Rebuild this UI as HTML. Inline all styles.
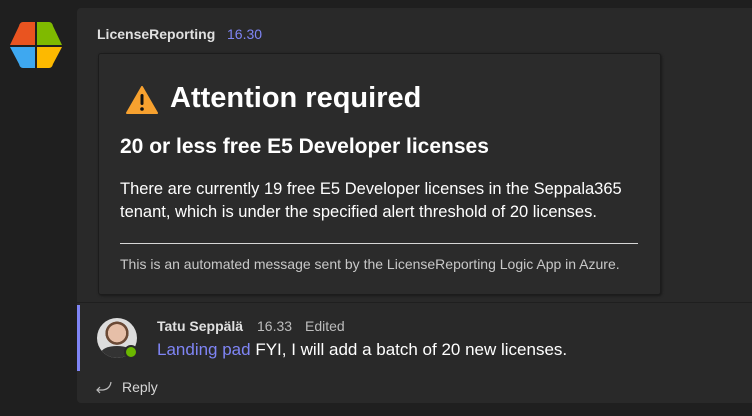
<!DOCTYPE html>
<html><head><meta charset="utf-8"><style>
*{margin:0;padding:0;box-sizing:border-box}
body{width:752px;height:416px;background:#1f1f1f;font-family:"Liberation Sans",sans-serif;position:relative;overflow:hidden;color:#fff}
.card{position:absolute;left:77px;top:8px;width:690px;height:395px;background:#292929;border-radius:4px}
.sep{position:absolute;left:77px;top:302px;width:690px;height:1px;background:#1f1f1f}
.inner{position:absolute;left:98px;top:53px;width:563px;height:242px;background:#2b2b2b;border:1px solid #1c1c1c;border-radius:3px;box-shadow:1px 1px 2px #1a1a1a}
.t{position:absolute;white-space:nowrap}
</style></head><body>
<div class="card"></div>
<div class="sep"></div>
<svg class="t" style="left:9px;top:21px" width="54" height="48" viewBox="0 0 54 48">
<path d="M14 1H26V24H1L10 5Q11 1 14 1Z" fill="#e95420"/>
<path d="M28 1H40Q43 1 44 5L53 24H28Z" fill="#7fba00"/>
<path d="M1 26H26V47H14Q11 47 10 43Z" fill="#3ea8f0"/>
<path d="M28 26H53L44 43Q43 47 40 47H28Z" fill="#fdb900"/>
</svg>
<div class="t" style="left:97px;top:26px;font-size:14px;font-weight:bold;color:#e0e0e0">LicenseReporting</div>
<div class="t" style="left:227px;top:26px;font-size:14px;color:#7f85f5">16.30</div>
<div class="inner"></div>
<svg class="t" style="left:126px;top:86px" width="32" height="28" viewBox="0 0 32 28"><path d="M16 1L31 27H1Z" fill="#f7a12f" stroke="#f7a12f" stroke-linejoin="round" stroke-width="2"/><rect x="14.5" y="8" width="3" height="11" rx="1.5" fill="#111"/><circle cx="16" cy="23" r="1.8" fill="#111"/></svg>
<div class="t" style="left:170px;top:82px;font-size:29px;font-weight:bold;color:#fff">Attention required</div>
<div class="t" style="left:120px;top:135px;font-size:21px;font-weight:bold;color:#fff">20 or less free E5 Developer licenses</div>
<div class="t" style="left:120px;top:178px;font-size:16.5px;line-height:23px;color:#fff">There are currently 19 free E5 Developer licenses in the Seppala365<br>tenant, which is under the specified alert threshold of 20 licenses.</div>
<div class="t" style="left:120px;top:243px;width:518px;height:1px;background:#d6d6d6"></div>
<div class="t" style="left:120px;top:256px;font-size:14px;color:#c8c8c8">This is an automated message sent by the LicenseReporting Logic App in Azure.</div>
<div class="t" style="left:77px;top:305px;width:3px;height:66px;background:#7f85f5"></div>
<div class="t" style="left:97px;top:318px;width:40px;height:40px;border-radius:50%;background:radial-gradient(circle at 50% 38%,#e6bfa8 0 28%,#6b4a36 29% 36%,#ddd 37%);overflow:hidden"><div style="position:absolute;left:4px;top:28px;width:32px;height:14px;background:#333;border-radius:50% 50% 0 0"></div></div>
<div class="t" style="left:124px;top:345px;width:14px;height:14px;border-radius:50%;background:#6bb700;border:2px solid #292929"></div>
<div class="t" style="left:157px;top:318px;font-size:14px;font-weight:bold;color:#e0e0e0">Tatu Seppälä</div>
<div class="t" style="left:257px;top:318px;font-size:14px;color:#bdbdbd">16.33</div>
<div class="t" style="left:305px;top:318px;font-size:14px;color:#bdbdbd">Edited</div>
<div class="t" style="left:157px;top:340px;font-size:17px;color:#fff"><span style="color:#7f85f5">Landing pad</span> FYI, I will add a batch of 20 new licenses.</div>
<svg class="t" style="left:95px;top:381px" width="18" height="14" viewBox="0 0 18 14"><path d="M16 1Q15 8 8 9H2M5 6L2 9L5 12" fill="none" stroke="#bbb" stroke-width="1.2"/></svg>
<div class="t" style="left:122px;top:379px;font-size:14px;color:#d6d6d6">Reply</div>
</body></html>
